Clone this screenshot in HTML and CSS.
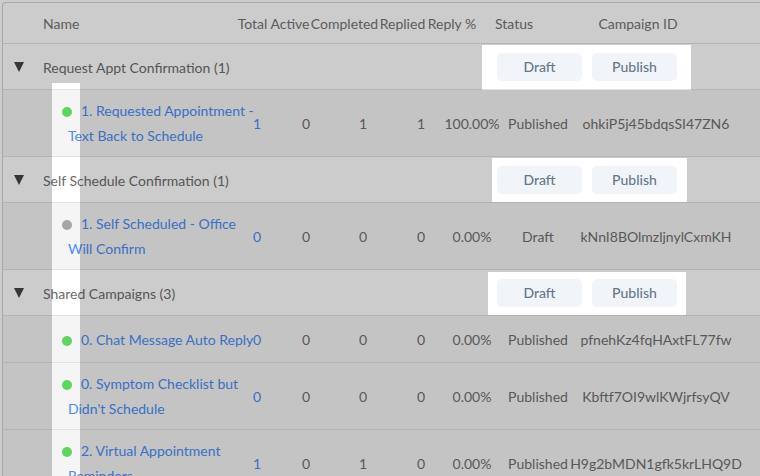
FILE: index.html
```html
<!DOCTYPE html>
<html>
<head>
<meta charset="utf-8">
<link rel="stylesheet" href="styles.css">
</head>
<body>
<div class="page">
  <div class="table">
    <div class="thead">
      <div></div>
      <div class="th th-name">Name</div>
      <div class="th">Total</div>
      <div class="th">Active</div>
      <div class="th">Completed</div>
      <div class="th">Replied</div>
      <div class="th">Reply %</div>
      <div class="th">Status</div>
      <div class="th">Campaign ID</div>
    </div>

    <div class="group">
      <div class="tri-cell"><span class="tri"></span></div>
      <div class="group-name">Request Appt Confirmation (1)</div>
      <div class="actions"><button class="btn">Draft</button><button class="btn">Publish</button></div>
    </div>
    <div class="row">
      <div class="name"><span class="dot on"></span><a class="link">1. Requested Appointment - Text Back to Schedule</a></div>
      <div class="c"><a class="link">1</a></div>
      <div class="c">0</div>
      <div class="c">1</div>
      <div class="c">1</div>
      <div class="c">100.00%</div>
      <div class="c">Published</div>
      <div class="c">ohkiP5j45bdqsSI47ZN6</div>
    </div>

    <div class="group">
      <div class="tri-cell"><span class="tri"></span></div>
      <div class="group-name">Self Schedule Confirmation (1)</div>
      <div class="actions"><button class="btn">Draft</button><button class="btn">Publish</button></div>
    </div>
    <div class="row">
      <div class="name"><span class="dot off"></span><a class="link">1. Self Scheduled - Office Will Confirm</a></div>
      <div class="c"><a class="link">0</a></div>
      <div class="c">0</div>
      <div class="c">0</div>
      <div class="c">0</div>
      <div class="c">0.00%</div>
      <div class="c">Draft</div>
      <div class="c">kNnI8BOlmzljnylCxmKH</div>
    </div>

    <div class="group">
      <div class="tri-cell"><span class="tri"></span></div>
      <div class="group-name">Shared Campaigns (3)</div>
      <div class="actions"><button class="btn">Draft</button><button class="btn">Publish</button></div>
    </div>
    <div class="row">
      <div class="name"><span class="dot on"></span><a class="link">0. Chat Message Auto Reply</a></div>
      <div class="c"><a class="link">0</a></div>
      <div class="c">0</div>
      <div class="c">0</div>
      <div class="c">0</div>
      <div class="c">0.00%</div>
      <div class="c">Published</div>
      <div class="c">pfnehKz4fqHAxtFL77fw</div>
    </div>
    <div class="row">
      <div class="name"><span class="dot on"></span><a class="link">0. Symptom Checklist but Didn't Schedule</a></div>
      <div class="c"><a class="link">0</a></div>
      <div class="c">0</div>
      <div class="c">0</div>
      <div class="c">0</div>
      <div class="c">0.00%</div>
      <div class="c">Published</div>
      <div class="c">Kbftf7OI9wlKWjrfsyQV</div>
    </div>
    <div class="row">
      <div class="name"><span class="dot on"></span><a class="link">2. Virtual Appointment Reminders</a></div>
      <div class="c"><a class="link">1</a></div>
      <div class="c">0</div>
      <div class="c">1</div>
      <div class="c">0</div>
      <div class="c">0.00%</div>
      <div class="c">Published</div>
      <div class="c">H9g2bMDN1gfk5krLHQ9D</div>
    </div>
  </div>

  <svg class="overlay" width="760" height="476" viewBox="0 0 760 476">
    <path fill="#000" fill-opacity="0.2" fill-rule="evenodd"
      d="M0 0H760V476H0Z M52 83H80V476H52Z M482 45H691V90H482Z M492 158H687V202H492Z M488 272H686V315H488Z"/>
  </svg>
</div>
</body>
</html>
```

FILE: styles.css
```css
* { box-sizing: border-box; }
html, body {
  margin: 0;
  padding: 0;
  width: 760px;
  height: 476px;
  overflow: hidden;
  background: #fff;
}
body {
  font-family: Lato, "Open Sans", sans-serif;
  font-size: 14px;
  color: #707070;
}
.page {
  position: relative;
  width: 760px;
  height: 476px;
  overflow: hidden;
  padding: 2px 0 0 2px;
}
.table {
  width: 820px;
  border-top: 1px solid #d2d2d2;
  border-left: 1px solid #d2d2d2;
  border-top-left-radius: 4px;
  background: #fff;
}
.thead {
  display: grid;
  grid-template-columns: 40px 192px 35px 40px 69px 47px 52px 72px 176px;
  height: 41px;
  align-items: center;
  border-bottom: 1px solid #e2e2e2;
  color: #747474;
}
.th {
  text-align: center;
  white-space: nowrap;
}
.th-name { text-align: left; }

.group {
  display: grid;
  grid-template-columns: 40px 454px auto;
  align-items: center;
  height: 46px;
  border-bottom: 1px solid #e2e2e2;
  background: #fff;
  color: #6c6c6c;
}
.group-name { padding-top: 1px; }
.tri-cell { padding-left: 11px; display: flex; align-items: center; padding-top: 1px; }
.tri {
  width: 0;
  height: 0;
  border-left: 5px solid transparent;
  border-right: 5px solid transparent;
  border-top: 10px solid #444;
}
.actions {
  display: flex;
  gap: 10px;
}
.btn {
  width: 85px;
  height: 28px;
  border: 0;
  border-radius: 5px;
  background: #f1f5f9;
  color: #66778a;
  font-family: Lato, "Open Sans", sans-serif;
  font-size: 14px;
  font-weight: 500;
  padding: 0;
}

.row {
  display: grid;
  grid-template-columns: 250px 8px 90px 24px 92px 10px 122px 114px;
  align-items: center;
  min-height: 47px;
  border-bottom: 1px solid #e2e2e2;
  background: #f5f5f5;
}
.name {
  padding: 8px 0 8px 65px;
  margin-right: -6px;
  line-height: 25px;
}
.link {
  color: #4b8cf5;
  text-decoration: none;
  cursor: pointer;
}
.dot {
  display: inline-block;
  width: 10px;
  height: 10px;
  border-radius: 50%;
  margin-left: -6px;
  margin-right: 9px;
  vertical-align: -1px;
}
.dot.on { background: #5cd65c; }
.dot.off { background: #a6a6a6; }
.c {
  display: flex;
  justify-content: center;
  white-space: nowrap;
}
.overlay {
  position: absolute;
  top: 0;
  left: 0;
  pointer-events: none;
}
```
